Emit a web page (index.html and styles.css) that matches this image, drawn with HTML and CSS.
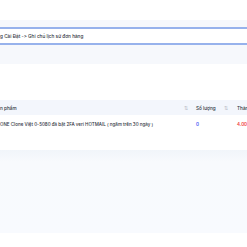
FILE: index.html
```html
<!DOCTYPE html>
<html lang="vi">
<head>
<meta charset="utf-8">
<link rel="stylesheet" href="styles.css">
</head>
<body>
<div class="page">
  <div class="top-space"></div>
  <div class="note-band">
    <div class="note-input">g Cài Đặt -&gt; Ghi chú lịch sử đơn hàng</div>
  </div>
  <div class="gap"></div>
  <div class="table">
    <div class="thead">
      <div class="th name">n phẩm</div>
      <div class="th sort">⇅</div>
      <div class="th qty">Số lượng</div>
      <div class="th sort">⇅</div>
      <div class="th total">Thàn</div>
    </div>
    <div class="trow">
      <div class="td name">ONE Clone Việt 0-5080 đã bật 2FA veri HOTMAIL ( ngâm trên 30 ngày )</div>
      <div class="td sort"></div>
      <div class="td qty blue">0</div>
      <div class="td sort"></div>
      <div class="td total red">4.00</div>
    </div>
  </div>
  <div class="after-gap"></div>
  <div class="footer-band"></div>
</div>
</body>
</html>
```
FILE: styles.css
```css
html, body {
  margin: 0;
  padding: 0;
  background: #ffffff;
}
body {
  font-family: Inter, "Noto Sans", sans-serif;
  color: #2f3440;
  overflow: hidden;
  font-feature-settings: "calt" 0, "liga" 0;
}
.page {
  width: 247px;
  height: 247px;
  overflow: hidden;
}
.top-space {
  height: 20px;
}
.note-band {
  background: #f6f8fc;
  padding: 7px 0 19px 0;
}
.note-input {
  background: #ffffff;
  border-top: 2px solid #97b2ec;
  border-bottom: 2px solid #97b2ec;
  height: 14px;
  line-height: 14px;
  font-size: 4.7px;
  font-weight: 500;
  white-space: nowrap;
  padding-left: 0;
}
.gap {
  height: 36px;
}
.thead, .trow {
  display: grid;
  grid-template-columns: 181px 9px 32px 8px auto;
  align-items: center;
  white-space: nowrap;
  font-weight: 500;
}
.thead {
  background: #f3f6fc;
  height: 15px;
  font-size: 4.7px;
}
.trow {
  height: 19px;
  font-size: 4.5px;
  font-weight: 500;
}
.qty {
  padding-left: 6px;
}
.total {
  padding-left: 7px;
}
.sort {
  color: #b7bcc6;
  font-size: 5px;
  text-align: center;
}
.blue {
  color: #4a5cf4;
  font-weight: 600;
}
.red {
  color: #f0453f;
  font-weight: 600;
}
.after-gap {
  height: 16px;
}
.footer-band {
  height: 83px;
  background: linear-gradient(#f1f5fa, #f8fafd 12px, #f8fafe);
}
```
